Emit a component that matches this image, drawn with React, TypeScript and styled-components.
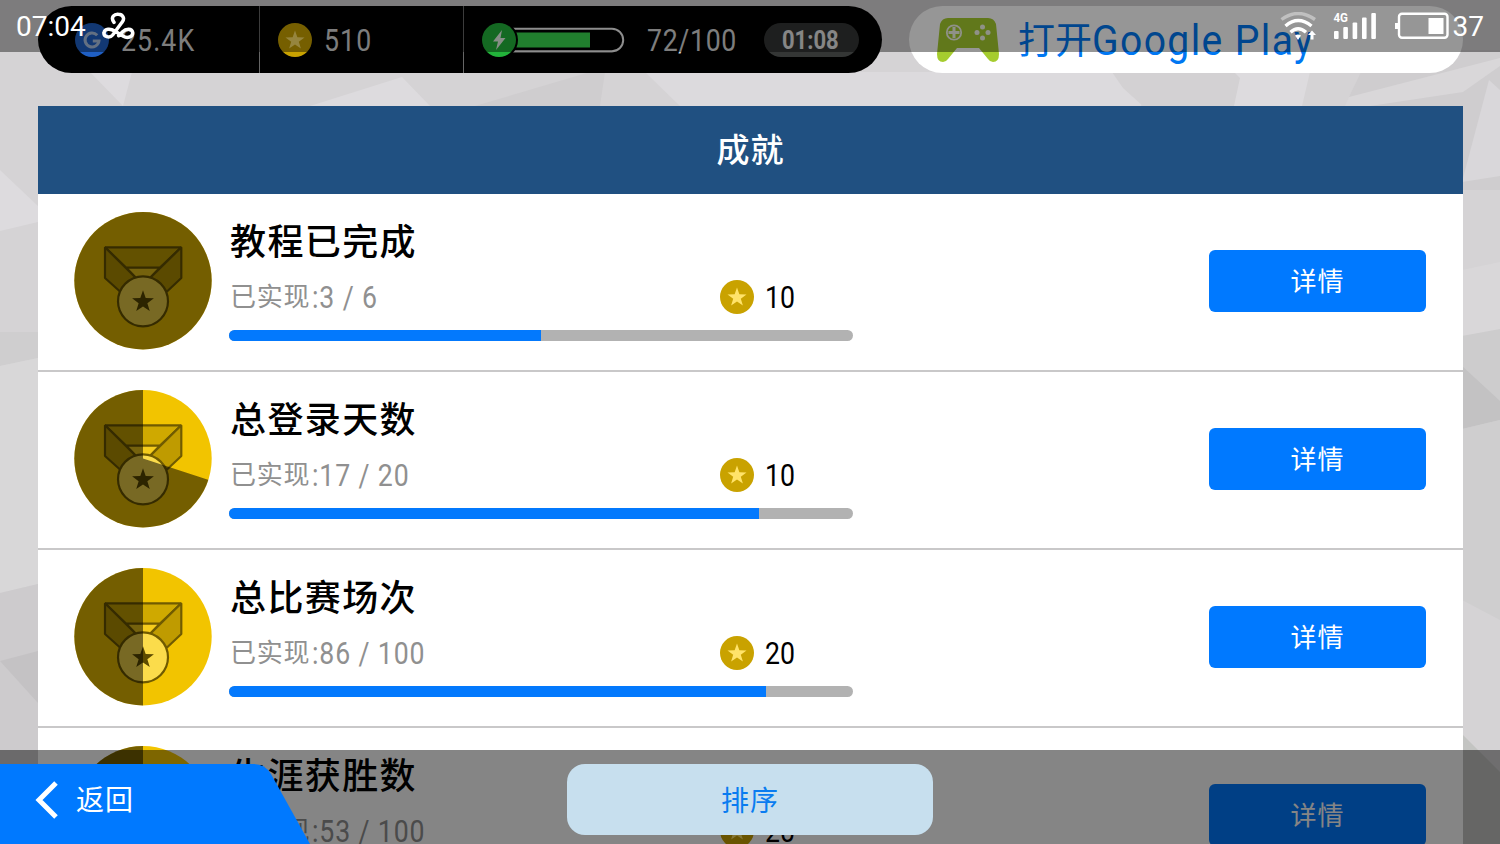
import React from 'react';
import styled, { createGlobalStyle } from 'styled-components';

interface IAchievement {
    title: string;
    done: number;
    total: number;
    reward: number;
    sector: number;
}

const achievements: IAchievement[] = [
    { title: '教程已完成', done: 3, total: 6, reward: 10, sector: 0 },
    { title: '总登录天数', done: 17, total: 20, reward: 10, sector: 108 },
    { title: '总比赛场次', done: 86, total: 100, reward: 20, sector: 180 },
    { title: '生涯获胜数', done: 53, total: 100, reward: 20, sector: 180 },
];

const GlobalStyle = createGlobalStyle`
    body {
        margin: 0;
        overflow: hidden;
        font-family: Roboto, 'Noto Sans CJK SC', sans-serif;
    }
    svg {
        display: block;
        flex-shrink: 0;
    }
    button {
        padding: 0;
        border: 0;
        font-family: inherit;
    }
`;

const Screen = styled.div`
    position: relative;
    width: 1500px;
    height: 844px;
    overflow: hidden;
    background: #d5d3d5;
`;

const Backdrop = styled.svg`
    position: absolute;
    top: 0;
    left: 0;
`;

const Content = styled.div`
    position: relative;
    box-sizing: border-box;
    padding: 6px 37px 0 38px;
`;

const TopBar = styled.header`
    display: flex;
    justify-content: space-between;
    height: 67px;
    margin-bottom: 33px;
`;

const Wallet = styled.div`
    display: flex;
    width: 844px;
    border-radius: 34px;
    background: #000;
`;

const WalletCell = styled.div<{ width: number; indent: number }>`
    display: flex;
    align-items: center;
    box-sizing: border-box;
    width: ${props => props.width}px;
    padding-left: ${props => props.indent}px;
    border-right: 1px solid #666;
    &:last-child {
        border-right: 0;
    }
`;

const Digits = styled.span<{ size: number; stretch?: number; weight?: number }>`
    display: inline-block;
    font-family: Roboto, sans-serif;
    font-size: ${props => props.size}px;
    font-weight: ${props => props.weight || 400};
    line-height: 1;
    white-space: pre;
    transform: scaleX(${props => props.stretch || 0.86});
    transform-origin: left center;
`;

const Amount = styled(Digits)`
    margin-left: 12px;
    padding-top: 1px;
    color: #d4d4d4;
    letter-spacing: 1.3px;
`;

const EnergyAmount = styled(Amount)`
    width: 117px;
    margin-left: 22px;
    letter-spacing: 0.8px;
`;

const Timer = styled.div`
    display: flex;
    align-items: center;
    box-sizing: border-box;
    width: 95px;
    height: 34px;
    padding: 1px 0 0 18px;
    border-radius: 17px;
    background: #343635;
    color: #e4e4e4;
`;

const PlayButton = styled.button`
    display: flex;
    align-items: center;
    box-sizing: border-box;
    width: 554px;
    padding-left: 28px;
    border-radius: 34px;
    background: #fff;
    color: #0077f2;
`;

const PlayLabel = styled.span`
    display: flex;
    align-items: center;
    margin: 3px 0 0 19px;
    font-size: 37px;
    line-height: 1;
`;

const PlayName = styled(Digits)`
    letter-spacing: 1.5px;
`;

const Panel = styled.main`
    width: 1425px;
`;

const PanelTitle = styled.h1`
    display: flex;
    align-items: center;
    justify-content: center;
    box-sizing: border-box;
    height: 88px;
    margin: 0;
    padding-bottom: 4px;
    background: #205081;
    color: #fff;
    font-size: 33px;
    font-weight: 500;
    letter-spacing: 1px;
`;

const Row = styled.section`
    display: flex;
    align-items: center;
    box-sizing: border-box;
    height: 178px;
    padding: 0 37px 2px 36px;
    border-bottom: 2px solid #c9c8c9;
    background: #fff;
`;

const RowBody = styled.div`
    width: 624px;
    height: 174px;
    margin-left: 17px;
`;

const RowTitle = styled.h2`
    height: 54px;
    margin: 22px 0 0 1px;
    color: #000;
    font-size: 36px;
    font-weight: 500;
    line-height: 54px;
    letter-spacing: 1.4px;
`;

const RowMeta = styled.div`
    display: flex;
    align-items: center;
    height: 40px;
    margin-top: 7px;
    color: #909090;
    font-size: 26px;
`;

const MetaLabel = styled.div`
    display: flex;
    align-items: center;
    width: 490px;
    padding-left: 1px;
    letter-spacing: 0.7px;
    line-height: 1;
`;

const Progress = styled(Digits)`
    margin-left: 2px;
    letter-spacing: 1px;
`;

const Reward = styled.div`
    display: flex;
    align-items: center;
    gap: 11px;
    color: #000;
`;

const Track = styled.div`
    height: 11px;
    margin-top: 13px;
    overflow: hidden;
    border-radius: 6px;
    background: #b2b2b2;
`;

const TrackFill = styled.div`
    height: 100%;
    background: #0379fd;
`;

const DetailButton = styled.button`
    box-sizing: border-box;
    width: 217px;
    height: 62px;
    margin-left: auto;
    padding-bottom: 3px;
    border-radius: 6px;
    background: #0079ff;
    color: #fff;
    font-size: 26px;
    letter-spacing: 1px;
`;

const StatusBar = styled.div`
    position: absolute;
    top: 0;
    left: 0;
    display: flex;
    justify-content: space-between;
    box-sizing: border-box;
    width: 100%;
    height: 52px;
    padding: 12px 16px 0;
    background: rgba(0, 0, 0, 0.41);
    color: #fff;
    font-size: 28px;
    line-height: 30px;
`;

const StatusGroup = styled.div`
    display: flex;
    align-items: flex-start;
`;

const StatusKnot = styled.svg`
    margin: 0 0 0 16px;
`;

const BottomBar = styled.footer`
    position: absolute;
    bottom: 0;
    left: 0;
    display: flex;
    align-items: flex-start;
    justify-content: center;
    box-sizing: border-box;
    width: 100%;
    height: 94px;
    padding-top: 14px;
    background: rgba(0, 0, 0, 0.48);
`;

const BackButton = styled.button`
    position: absolute;
    bottom: 0;
    left: 0;
    display: flex;
    align-items: flex-start;
    width: 310px;
    height: 80px;
    background: none;
    color: #fff;
    font-size: 28px;
`;

const BackShape = styled.svg`
    position: absolute;
    top: 0;
    left: 0;
`;

const BackLabel = styled.span`
    position: relative;
    display: flex;
    align-items: center;
    gap: 18px;
    height: 71px;
    padding-left: 35px;
    letter-spacing: 1px;
`;

const BackText = styled.span`
    padding-bottom: 3px;
`;

const SortButton = styled.button`
    box-sizing: border-box;
    width: 366px;
    height: 71px;
    padding-bottom: 2px;
    border-radius: 18px;
    background: #c7dfee;
    color: #0a7cf0;
    font-size: 28px;
    letter-spacing: 1px;
`;

const STAR = '0,-10 2.35,-3.24 9.51,-3.09 3.8,1.24 5.88,8.09 0,4 -5.88,8.09 -3.8,1.24 -9.51,-3.09 -2.35,-3.24';

const Coin: React.FC = () => (
    <svg width="34" height="34" viewBox="-17 -17 34 34">
        <circle r="17" fill="#c9a200" />
        <polygon points={STAR} transform="translate(0 .5)" fill="#ffe36a" />
    </svg>
);

const GpCoin: React.FC = () => (
    <svg width="34" height="34" viewBox="-17 -17 34 34">
        <circle r="17" fill="#1f5fc4" />
        <path d="M5.2 -4.8 A7 7 0 1 0 7 0.9 H0.8" fill="none" stroke="#a8bede" strokeWidth="3" />
    </svg>
);

const Energy: React.FC = () => (
    <svg width="143" height="34" viewBox="0 0 143 34">
        <path d="M20 5.8 H130 A11.2 11.2 0 0 1 130 28.2 H20" fill="none" stroke="#f0f0f0" strokeWidth="2" />
        <rect x="20" y="9.5" width="88" height="15" fill="#39d94e" />
        <circle cx="17" cy="17" r="19" fill="#000" />
        <circle cx="17" cy="17" r="17" fill="#22b33a" />
        <path d="M20 7 L11 18.5 H16 L14 27 L23.5 15 H18.5 Z" fill="#e6f2e6" />
    </svg>
);

const Gamepad: React.FC = () => (
    <svg width="62" height="46" viewBox="0 0 62 46">
        <path
            d="M11 1 H51 Q57 1 59 7 L62 37 Q62 45 56 45 Q53 45 51 42 L42 31 H20 L11 42 Q9 45 6 45 Q0 45 0 37 L3 7 Q5 1 11 1 Z"
            fill="#a5cc2e"
        />
        <circle cx="17" cy="15.5" r="7.2" fill="none" stroke="#f4f7e8" strokeWidth="1.8" />
        <path d="M17 10 V21 M11.5 15.5 H22.5" stroke="#f4f7e8" strokeWidth="3" />
        <g fill="#f4f7e8">
            <circle cx="45.5" cy="10" r="2.5" />
            <circle cx="45.5" cy="21" r="2.5" />
            <circle cx="40" cy="15.5" r="2.5" />
            <circle cx="51" cy="15.5" r="2.5" />
        </g>
    </svg>
);

const sectorPath = (deg: number) => {
    const rad = (deg * Math.PI) / 180;
    const x = 143 + 70 * Math.sin(rad);
    const y = 280.5 - 70 * Math.cos(rad);
    return `M143 280.5 L${x} ${y} A70 70 0 ${deg > 180 ? 0 : 1} 1 143 210.5 Z`;
};

const Medal: React.FC<{ sector: number }> = ({ sector }) => {
    const clip = `medal-${sector}`;
    return (
        <svg width="138" height="138" viewBox="74 212 138 138">
            <clipPath id={clip}>
                <circle cx="143" cy="280.7" r="68.7" />
            </clipPath>
            <g clipPath={`url(#${clip})`}>
                <rect x="74" y="211" width="138" height="139" fill="#f2c400" />
                <g stroke="#705b00" strokeWidth="2.2" strokeLinejoin="bevel">
                    <path d="M126 267.5 H160 L149 279 H137 Z" fill="#f5cc1c" />
                    <path d="M105 247.3 H181.3 L160 267.5 H126 Z" fill="#cfa900" />
                    <path d="M105 247.3 L138 280 L120 291.5 L105 278 Z" fill="#bf9b00" />
                    <path d="M181.3 247.3 L148 280 L167 291.5 L181.3 278 Z" fill="#bf9b00" />
                    <circle cx="143" cy="301.3" r="25" fill="#fbdc4b" />
                </g>
                <polygon points={STAR} transform="translate(143 301.8) scale(1.15)" fill="#5d4b00" />
                {sector === 0 ? (
                    <rect x="74" y="211" width="138" height="139" fill="rgba(0,0,0,.52)" />
                ) : (
                    <path d={sectorPath(sector)} fill="rgba(0,0,0,.52)" />
                )}
            </g>
        </svg>
    );
};

const StatusIcons: React.FC = () => (
    <svg width="173" height="34" viewBox="1280 12 173 34">
        <g fill="none" stroke="#fff" strokeWidth="3.4">
            <path d="M1281.5 19.5 Q1298 7.5 1315 19.5" opacity=".4" />
            <path d="M1285.5 26 Q1298 15 1311.5 26" />
            <path d="M1290.5 32.2 Q1298 25.5 1306 32.2" />
        </g>
        <path d="M1295 35.5 Q1298 33.5 1301 35.5 L1298 40 Z" fill="#fff" />
        <path d="M1312 30.5 L1316 35 H1313.5 V39.5 H1310.5 V35 H1308 Z" fill="#fff" />
        <text
            x="1333.5"
            y="22.3"
            fill="#fff"
            fontFamily="Roboto, sans-serif"
            fontSize="13"
            fontWeight="700"
            textLength="14.5"
            lengthAdjust="spacingAndGlyphs"
        >
            4G
        </text>
        <g fill="#fff">
            <rect x="1334" y="31" width="4.6" height="8" rx="1" />
            <rect x="1343.3" y="27" width="4.6" height="12" rx="1" />
            <rect x="1352.6" y="22.5" width="4.6" height="16.5" rx="1" />
            <rect x="1362" y="17.5" width="4.6" height="21.5" rx="1" />
            <rect x="1371.3" y="13" width="4.6" height="26" rx="1" />
            <rect x="1395" y="23" width="4" height="6" />
            <rect x="1428.5" y="18" width="15" height="16" />
        </g>
        <rect x="1399" y="13.8" width="48.5" height="24" rx="3" fill="none" stroke="#fff" strokeWidth="2.4" />
    </svg>
);

const App: React.FC = () => (
    <Screen>
        <GlobalStyle />
        <Backdrop width="1500" height="844">
            <path d="M90 72 L132 72 L123 106 Z M310 106 L402 77 L430 106 Z" fill="#dddbde" />
            <path d="M0 170 L38 206 V222 L0 231 Z" fill="#dddbde" />
            <path d="M0 332 H38 V358 L0 366 Z" fill="#cfcecf" />
            <path d="M0 366 L38 358 V584 L0 593 Z" fill="#d8d7d8" />
            <path d="M0 593 L38 584 V844 H0 Z" fill="#cdcbcd" />
            <path d="M0 661 L38 651 V703 Z" fill="#c4c2c4" />
            <path d="M645 72 H1150 L1141 106 H680 Z" fill="#dcdadd" />
            <path d="M475 106 L590 72 H605 L600 106 Z" fill="#cfcdcf" />
            <path d="M1112 72 H1234 L1240 78 L1234 106 H1143 L1123 88 Z" fill="#d3d1d3" />
            <path d="M1240 78 L1234 72 H1310 L1302 106 H1234 Z" fill="#dddbde" />
            <path d="M1349 97 L1361 72 L1462 50 H1500 V190 H1462 Z" fill="#cfcdcf" />
            <path d="M1349 97 L1500 58 V66 L1463 92 L1370 106 H1345 Z" fill="#d9d7d9" />
            <path d="M1462 182 L1489 80 L1500 90 V176 Z" fill="#d9d7da" />
            <path d="M1462 270 L1500 262 V330 L1462 336 Z" fill="#d9d7d9" />
            <path d="M1462 336 L1500 329 V430 L1462 430 Z" fill="#cdcccd" />
            <path d="M1462 366 L1500 401 V420 L1462 429 Z" fill="#c3c2c3" />
            <path d="M1462 429 L1500 420 V620 L1462 600 Z" fill="#cfcecf" />
            <path d="M1462 734 L1500 772 V844 H1462 Z" fill="#c3c4c2" />
        </Backdrop>
        <Content>
            <TopBar>
                <Wallet>
                    <WalletCell width={222} indent={37}>
                        <GpCoin />
                        <Amount size={31}>25.4K</Amount>
                    </WalletCell>
                    <WalletCell width={204} indent={18}>
                        <Coin />
                        <Amount size={31}>510</Amount>
                    </WalletCell>
                    <WalletCell width={418} indent={18}>
                        <Energy />
                        <EnergyAmount size={31}>72/100</EnergyAmount>
                        <Timer>
                            <Digits size={25} weight={700} stretch={0.88}>
                                01:08
                            </Digits>
                        </Timer>
                    </WalletCell>
                </Wallet>
                <PlayButton>
                    <Gamepad />
                    <PlayLabel>
                        打开
                        <PlayName size={42} stretch={0.93}>
                            Google Play
                        </PlayName>
                    </PlayLabel>
                </PlayButton>
            </TopBar>
            <Panel>
                <PanelTitle>成就</PanelTitle>
                {achievements.map(item => (
                    <Row key={item.title}>
                        <Medal sector={item.sector} />
                        <RowBody>
                            <RowTitle>{item.title}</RowTitle>
                            <RowMeta>
                                <MetaLabel>
                                    已实现
                                    <Progress size={31}>{`:${item.done} / ${item.total}`}</Progress>
                                </MetaLabel>
                                <Reward>
                                    <Coin />
                                    <Digits size={31}>{item.reward}</Digits>
                                </Reward>
                            </RowMeta>
                            <Track>
                                <TrackFill style={{ width: `${(item.done / item.total) * 100}%` }} />
                            </Track>
                        </RowBody>
                        <DetailButton>详情</DetailButton>
                    </Row>
                ))}
            </Panel>
        </Content>
        <StatusBar>
            <StatusGroup>
                07:04
                <StatusKnot width="34" height="29" viewBox="304 35 102 87">
                    <path
                        d="M340 66 C328 50 342 41 353 42 C366 42 374 54 364 66 L336 104 C326 116 308 108 310 97 C312 84 330 84 342 92 L368 108 C382 116 398 108 396 96 C394 84 376 84 366 94 L354 106"
                        fill="none"
                        stroke="#fff"
                        strokeWidth="10.5"
                        strokeLinecap="round"
                    />
                </StatusKnot>
            </StatusGroup>
            <StatusGroup>
                <StatusIcons />
                37
            </StatusGroup>
        </StatusBar>
        <BottomBar>
            <BackButton>
                <BackShape width="310" height="80">
                    <path d="M0 0 H254 Q265 0 271 10 L310 80 H0 Z" fill="#0079ff" />
                </BackShape>
                <BackLabel>
                    <svg width="23" height="38" viewBox="0 0 23 38">
                        <path d="M21 2 L4 19 L21 36" fill="none" stroke="#fff" strokeWidth="5" />
                    </svg>
                    <BackText>返回</BackText>
                </BackLabel>
            </BackButton>
            <SortButton>排序</SortButton>
        </BottomBar>
    </Screen>
);

export default App;
